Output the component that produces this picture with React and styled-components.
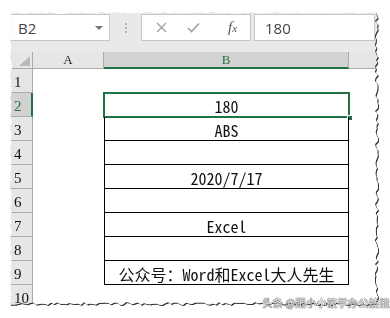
import React from "react";
import styled, { createGlobalStyle } from "styled-components";

const GREEN = "#217346";
const W = 368;
const H = 293;

// torn paper edge, fixed seed so it is the same every render
const rnd = (i) => {
  const s = Math.sin(i * 12.9898 + 4.1414) * 43758.5453;
  return s - Math.floor(s);
};

const tornEdge = (() => {
  const pts = [];
  let k = 0;
  for (let x = 0; x <= W; x += 3) pts.push(`${x}px ${(rnd(k++) * 2).toFixed(1)}px`);
  for (let y = 0; y <= H; y += 3) pts.push(`${(W - rnd(k++) * 3.5).toFixed(1)}px ${y}px`);
  for (let x = W; x >= 0; x -= 3) pts.push(`${x}px ${(H - rnd(k++) * 3).toFixed(1)}px`);
  for (let y = H; y >= 0; y -= 3) pts.push(`${(rnd(k++) * 2).toFixed(1)}px ${y}px`);
  return `polygon(${pts.join(",")})`;
})();

const rows = [
  { n: 1 },
  { n: 2, text: "180", boxed: true, selected: true },
  { n: 3, text: "ABS", boxed: true },
  { n: 4, text: "", boxed: true },
  { n: 5, text: "2020/7/17", boxed: true },
  { n: 6, text: "", boxed: true },
  { n: 7, text: "Excel", boxed: true },
  { n: 8, text: "", boxed: true },
  { n: 9, text: "公众号：Word和Excel大人先生", boxed: true },
  { n: 10 },
];

const App = () => {
  return (
    <>
      <GlobalStyle />
      <Page>
        <Frame>
          <Sheet>
            <FormulaBar>
              <NameBox>
                <span>B2</span>
                <Caret />
              </NameBox>
              <Dots>
                <i />
                <i />
                <i />
              </Dots>
              <FxBox>
                <svg width="11" height="11" viewBox="0 0 11 11">
                  <path d="M1 1L10 10M10 1L1 10" stroke="#a0a0a0" strokeWidth="1.3" fill="none" />
                </svg>
                <svg width="13" height="11" viewBox="0 0 13 11">
                  <path d="M1 6L4.5 9.5L12 1.5" stroke="#a0a0a0" strokeWidth="1.6" fill="none" />
                </svg>
                <Fx>
                  f<small>x</small>
                </Fx>
              </FxBox>
              <FormulaInput>180</FormulaInput>
            </FormulaBar>

            <HeadRow>
              <Corner />
              <ColHead $width={71}>A</ColHead>
              <ColHead $width={245} $selected>
                B
              </ColHead>
              <ColHead $rest />
            </HeadRow>

            {rows.map((r) => (
              <Row key={r.n}>
                <RowHead $selected={r.selected}>{r.n}</RowHead>
                <ACell />
                <BCell $boxed={r.boxed}>
                  {r.text}
                  {r.selected && (
                    <Selection>
                      <Handle />
                    </Selection>
                  )}
                </BCell>
              </Row>
            ))}
          </Sheet>
        </Frame>
        <Watermark>头条 @跟小小筱学办公技能</Watermark>
      </Page>
    </>
  );
};

const GlobalStyle = createGlobalStyle`
  * { box-sizing: border-box; }
  body {
    margin: 0;
    background: #ffffff;
  }
`;

const Page = styled.div`
  width: 390px;
  height: 318px;
  position: relative;
  overflow: hidden;
  background: #ffffff;
`;

const Frame = styled.div`
  padding: 12px 0 0 10px;
  filter: drop-shadow(1px 1px 0.6px rgba(0, 0, 0, 0.8));
`;

const Sheet = styled.div`
  width: ${W}px;
  height: ${H}px;
  background: #e6e6e6;
  overflow: hidden;
  clip-path: ${tornEdge};
  display: flex;
  flex-direction: column;
`;

/////////// formula bar

const FormulaBar = styled.div`
  height: 40px;
  flex-shrink: 0;
  display: flex;
  align-items: flex-start;
  padding-top: 2px;
  background: #e9e9e9;
`;

const NameBox = styled.div`
  width: 101px;
  height: 27px;
  margin-left: -1px;
  background: #ffffff;
  border: 1px solid #c6c6c6;
  display: flex;
  align-items: center;
  justify-content: space-between;
  padding: 0 6px 0 8px;
  font-family: "Open Sans", "Noto Sans", sans-serif;
  font-size: 15px;
  color: #444444;
`;

const Caret = styled.div`
  width: 0;
  height: 0;
  border-left: 4px solid transparent;
  border-right: 4px solid transparent;
  border-top: 4px solid #777777;
`;

const Dots = styled.div`
  width: 31px;
  height: 27px;
  display: flex;
  flex-direction: column;
  align-items: center;
  justify-content: center;
  gap: 2px;
  & i {
    width: 2px;
    height: 2px;
    background: #b5b5b5;
  }
`;

const FxBox = styled.div`
  width: 110px;
  height: 27px;
  background: #ffffff;
  border: 1px solid #c6c6c6;
  display: flex;
  align-items: center;
  padding-left: 14px;
  gap: 20px;
`;

const Fx = styled.span`
  margin-left: 8px;
  font-family: "Liberation Serif", serif;
  font-style: italic;
  font-size: 15px;
  color: #555555;
  & small {
    font-size: 11px;
  }
`;

const FormulaInput = styled.div`
  flex: 1;
  height: 27px;
  margin: 0 3px 0 3px;
  background: #ffffff;
  border: 1px solid #c6c6c6;
  padding-left: 10px;
  display: flex;
  align-items: center;
  font-family: "Open Sans", "Noto Sans", sans-serif;
  font-size: 15px;
  color: #444444;
`;

/////////// column heads

const HeadRow = styled.div`
  height: 17px;
  flex-shrink: 0;
  display: flex;
  background: #e6e6e6;
  border-bottom: 1px solid #ababab;
`;

const Corner = styled.div`
  width: 23px;
  position: relative;
  border-right: 1px solid #ababab;
  &::after {
    content: "";
    position: absolute;
    right: 2px;
    bottom: 2px;
    border-left: 11px solid transparent;
    border-bottom: 10px solid #b9b9b9;
  }
`;

const ColHead = styled.div`
  width: ${(p) => (p.$rest ? "auto" : `${p.$width}px`)};
  flex: ${(p) => (p.$rest ? 1 : "none")};
  display: flex;
  align-items: center;
  justify-content: center;
  border-right: ${(p) => (p.$rest ? "none" : "1px solid #ababab")};
  background: ${(p) => (p.$selected ? "#d2d2d2" : "#e6e6e6")};
  border-bottom: ${(p) => (p.$selected ? `2px solid ${GREEN}` : "none")};
  margin-bottom: ${(p) => (p.$selected ? "-1px" : "0")};
  font-family: "Liberation Serif", serif;
  font-size: 13px;
  color: ${(p) => (p.$selected ? GREEN : "#222222")};
`;

/////////// grid

const Row = styled.div`
  height: 24px;
  flex-shrink: 0;
  display: flex;
  background: #ffffff;
`;

const RowHead = styled.div`
  width: 23px;
  background: ${(p) => (p.$selected ? "#d2d2d2" : "#e6e6e6")};
  border-right: ${(p) => (p.$selected ? `2px solid ${GREEN}` : "1px solid #ababab")};
  border-bottom: 1px solid #ababab;
  display: flex;
  align-items: flex-end;
  padding: 0 0 2px 4px;
  font-family: "Liberation Serif", serif;
  font-size: 15px;
  line-height: 1;
  color: ${(p) => (p.$selected ? GREEN : "#111111")};
`;

const ACell = styled.div`
  width: 71px;
`;

const BCell = styled.div`
  width: 245px;
  position: relative;
  display: flex;
  align-items: center;
  justify-content: center;
  padding-top: 2px;
  border-left: 1px solid ${(p) => (p.$boxed ? "#000000" : "transparent")};
  border-right: 1px solid ${(p) => (p.$boxed ? "#000000" : "transparent")};
  border-bottom: 1px solid ${(p) => (p.$boxed ? "#000000" : "transparent")};
  font-family: "Noto Sans Mono CJK SC", "Noto Sans CJK SC", monospace;
  font-size: 16px;
  color: #111111;
`;

const Selection = styled.div`
  position: absolute;
  left: -2px;
  top: -1px;
  right: -2px;
  bottom: -2px;
  border: 2px solid ${GREEN};
`;

const Handle = styled.div`
  position: absolute;
  right: -5px;
  bottom: -5px;
  width: 6px;
  height: 6px;
  background: ${GREEN};
  border: 1px solid #ffffff;
`;

const Watermark = styled.div`
  position: absolute;
  left: 262px;
  top: 295px;
  font-family: "Noto Sans CJK SC", sans-serif;
  font-size: 10.5px;
  color: rgba(255, 255, 255, 0.92);
  text-shadow: 0 0 1px #444, 0 0 1px #444, 0 0 1px #444;
  white-space: nowrap;
`;

export default App;
